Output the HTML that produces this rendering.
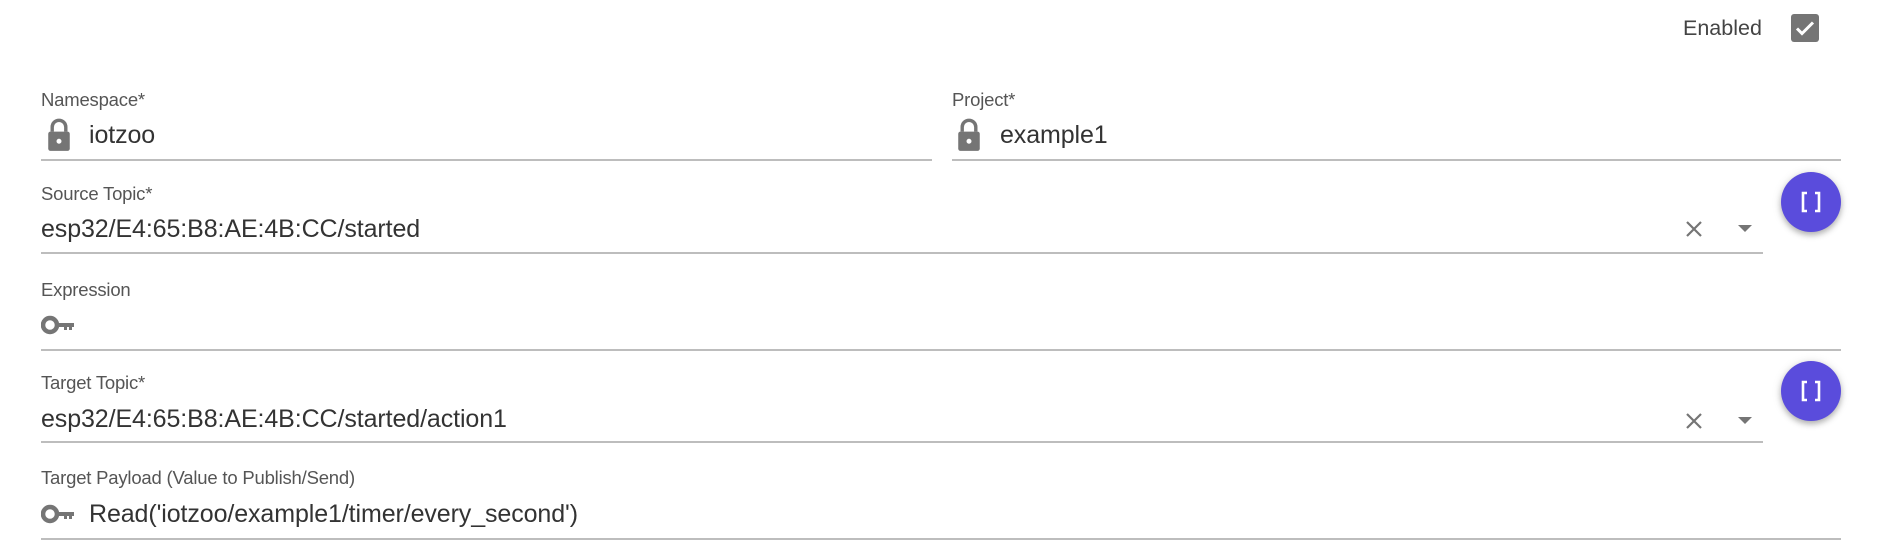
<!DOCTYPE html>
<html><head><meta charset="utf-8"><style>
body{margin:0;width:1880px;height:545px;background:#fff;position:relative;overflow:hidden;font-family:"Liberation Sans",Arial,sans-serif;color:#212121}
.a{position:absolute}
.lbl{position:absolute;font-size:18.5px;color:#555;line-height:1;white-space:nowrap;letter-spacing:-0.2px}
.val{position:absolute;font-size:25px;color:#333;line-height:1;white-space:nowrap;letter-spacing:-0.1px}
.ln{position:absolute;height:1.5px;background:#bdbdbd}
.fab{position:absolute;width:60px;height:60px;border-radius:50%;background:#5a4cdc;box-shadow:0 3px 6px rgba(0,0,0,.25),0 1px 10px rgba(0,0,0,.12);display:flex;align-items:center;justify-content:center}
</style></head><body>
<div class="a" style="left:1683px;top:16px;font-size:21.5px;color:#444">Enabled</div>
<div class="a" style="left:1791px;top:14px;width:28px;height:28px;background:#757575;border-radius:3px">
<svg width="28" height="28" viewBox="0 0 28 28"><path d="M6 14.5l5 5 11-11" stroke="#fff" stroke-width="3" fill="none"/></svg></div>

<div class="lbl" style="left:41px;top:91px">Namespace*</div>
<svg class="a" style="left:45px;top:118px" width="28" height="34" viewBox="0 0 24 30"><path d="M6 12V8a6 6 0 0 1 12 0v4" stroke="#757575" stroke-width="3" fill="none"/><rect x="2.5" y="12" width="19" height="17" rx="2" fill="#757575"/><circle cx="12" cy="20.5" r="2.2" fill="#fff"/></svg>
<div class="val" style="left:89px;top:123px">iotzoo</div>
<div class="ln" style="left:41px;top:159px;width:891px"></div>

<div class="lbl" style="left:952px;top:91px">Project*</div>
<svg class="a" style="left:955px;top:118px" width="28" height="34" viewBox="0 0 24 30"><path d="M6 12V8a6 6 0 0 1 12 0v4" stroke="#757575" stroke-width="3" fill="none"/><rect x="2.5" y="12" width="19" height="17" rx="2" fill="#757575"/><circle cx="12" cy="20.5" r="2.2" fill="#fff"/></svg>
<div class="val" style="left:1000px;top:123px">example1</div>
<div class="ln" style="left:952px;top:159px;width:889px"></div>

<div class="lbl" style="left:41px;top:185px">Source Topic*</div>
<div class="val" style="left:41px;top:217px">esp32/E4:65:B8:AE:4B:CC/started</div>
<svg class="a" style="left:1685px;top:220px" width="18" height="18" viewBox="0 0 18 18"><path d="M2 2L16 16M16 2L2 16" stroke="#757575" stroke-width="2.2"/></svg>
<svg class="a" style="left:1738px;top:225px" width="14" height="8" viewBox="0 0 14 8"><path d="M0 0h14L7 7z" fill="#757575"/></svg>
<div class="ln" style="left:41px;top:252px;width:1722px"></div>
<div class="fab" style="left:1781px;top:172px"><svg width="20" height="22" viewBox="0 0 20 22"><path d="M6 2H2v18h4M14 2h4v18h-4" stroke="#fff" stroke-width="2.6" fill="none"/></svg></div>

<div class="lbl" style="left:41px;top:281px">Expression</div>
<svg class="a" style="left:41px;top:314px" width="34" height="22" viewBox="0 0 34 22"><circle cx="9" cy="11" r="7" stroke="#757575" stroke-width="4.5" fill="none"/><path d="M16 9h17v4h-2v3h-3v-3h-2v3h-3v-3h-7z" fill="#757575"/></svg>
<div class="ln" style="left:41px;top:349px;width:1800px"></div>

<div class="lbl" style="left:41px;top:374px">Target Topic*</div>
<div class="val" style="left:41px;top:407px">esp32/E4:65:B8:AE:4B:CC/started/action1</div>
<svg class="a" style="left:1685px;top:412px" width="18" height="18" viewBox="0 0 18 18"><path d="M2 2L16 16M16 2L2 16" stroke="#757575" stroke-width="2.2"/></svg>
<svg class="a" style="left:1738px;top:417px" width="14" height="8" viewBox="0 0 14 8"><path d="M0 0h14L7 7z" fill="#757575"/></svg>
<div class="ln" style="left:41px;top:441px;width:1722px"></div>
<div class="fab" style="left:1781px;top:361px"><svg width="20" height="22" viewBox="0 0 20 22"><path d="M6 2H2v18h4M14 2h4v18h-4" stroke="#fff" stroke-width="2.6" fill="none"/></svg></div>

<div class="lbl" style="left:41px;top:469px">Target Payload (Value to Publish/Send)</div>
<svg class="a" style="left:41px;top:503px" width="34" height="22" viewBox="0 0 34 22"><circle cx="9" cy="11" r="7" stroke="#757575" stroke-width="4.5" fill="none"/><path d="M16 9h17v4h-2v3h-3v-3h-2v3h-3v-3h-7z" fill="#757575"/></svg>
<div class="val" style="left:89px;top:502px">Read('iotzoo/example1/timer/every_second')</div>
<div class="ln" style="left:41px;top:538px;width:1800px"></div>
</body></html>
